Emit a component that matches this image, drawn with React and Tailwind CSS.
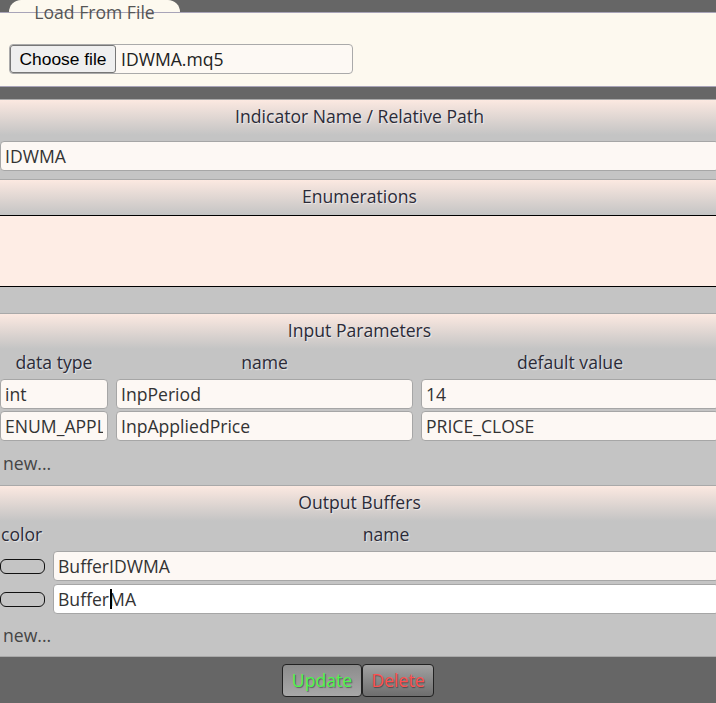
import React, { useState } from "react";

const font = "font-['Open_Sans',sans-serif]";
const headerCls =
  "h-[36px] border-t border-[#a9a9a9] bg-gradient-to-b from-[#fce9e1] to-[#c4c4c4] pt-[4px] text-center text-[17.6px] leading-[24px] text-[#2b2b38] [text-shadow:1px_1px_1px_rgba(255,255,255,0.6)]";
const inputCls =
  "block h-[30px] w-full rounded-[4px] border border-[#a6a6a6] bg-[#fdf8f4] px-[4px] text-[17.6px] text-[#333] outline-none";
const labelCls =
  "h-[26px] text-center text-[17.6px] leading-[26px] text-[#2b2b38] [text-shadow:1px_1px_1px_rgba(255,255,255,0.6)]";
const newCls = "pl-[3px] text-[17.6px] leading-[24px] text-[#444]";

const Section = ({ title, children }) => (
  <div className="bg-[#c4c4c4]">
    <div className={headerCls}>{title}</div>
    {children}
  </div>
);

export default function App() {
  const [params] = useState([
    { type: "int", name: "InpPeriod", value: "14" },
    { type: "ENUM_APPLIED_PRICE", name: "InpAppliedPrice", value: "PRICE_CLOSE" },
  ]);
  const [buffers] = useState(["BufferIDWMA", "BufferMA"]);

  return (
    <div className={`${font} h-[703px] w-[716px] overflow-hidden bg-[#666]`}>
      {/* load panel with its tab */}
      <div className="h-[12px] pl-[9px]">
        <div className="h-[13px] w-[171px] rounded-t-[12px] bg-[#fdf9ef]" />
      </div>
      <div className="h-[75px] border-y border-[#a8a4b8] bg-[#fdf9ef] pl-[9px]">
        <div className="relative -mt-[13px] h-[24px] w-[171px] text-center text-[17.6px] leading-[24px] text-[#555]">
          Load From File
        </div>
        <div className="mt-[20px] flex h-[30px] w-[344px] items-center rounded-[4px] border border-[#aaa] bg-[#fdf9f4]">
          <button className="h-[28px] w-[106px] rounded-[3px] border border-[#777] bg-[#efefef] font-['Liberation_Sans',sans-serif] text-[17.4px] text-black">
            Choose file
          </button>
          <span className="pl-[5px] text-[17.6px] text-[#222]">IDWMA.mq5</span>
        </div>
      </div>
      <div className="h-[12px]" />

      <div className="w-[719px]">
        <Section title="Indicator Name / Relative Path">
          <div className="pt-[6px] pb-[8px]">
            <input className={inputCls} defaultValue="IDWMA" />
          </div>
        </Section>

        <Section title="Enumerations">
          <div className="h-[72px] border-y-[1.5px] border-black bg-[#feede5]" />
          <div className="h-[26px]" />
        </Section>

        <Section title="Input Parameters">
          <div className="grid grid-cols-[108px_297px_1fr] gap-x-[8px] gap-y-[2px] pb-[10px]">
            <div className={`${labelCls} mb-[2px]`}>data type</div>
            <div className={`${labelCls} mb-[2px]`}>name</div>
            <div className={`${labelCls} mb-[2px]`}>default value</div>
            {params.map((p) => (
              <React.Fragment key={p.name}>
                <input className={inputCls} defaultValue={p.type} />
                <input className={inputCls} defaultValue={p.name} />
                <input className={inputCls} defaultValue={p.value} />
              </React.Fragment>
            ))}
          </div>
          <div className={`${newCls} pb-[10px]`}>new...</div>
        </Section>

        <Section title="Output Buffers">
          <div className="grid grid-cols-[45px_1fr] items-center gap-x-[8px] gap-y-[3px] pb-[9px]">
            <div className={`${labelCls} mb-[1px] pl-[1px] text-left`}>color</div>
            <div className={`${labelCls} mb-[1px]`}>name</div>
            {buffers.map((b, i) => (
              <React.Fragment key={b}>
                <div className="h-[15px] w-[45px] rounded-[6px] border-[1.5px] border-[#111]" />
                <div className="relative">
                  <input
                    className={
                      i === 1
                        ? `${inputCls} border-[#138a13] bg-white`
                        : inputCls
                    }
                    defaultValue={b}
                  />
                  {i === 1 && (
                    <span className="absolute left-[57px] top-[5px] h-[20px] w-[1.5px] bg-black" />
                  )}
                </div>
              </React.Fragment>
            ))}
          </div>
          <div className={`${newCls} pb-[9px]`}>new...</div>
        </Section>
      </div>

      {/* action buttons */}
      <div className="flex justify-center border-t border-[#a9a9a9] pt-[7px]">
        <button className="h-[33px] w-[80px] rounded-[4px] border border-[#222] bg-gradient-to-b from-[#8c8c8c] to-[#a8a8a8] text-[17.6px] text-[#4cf54c] [text-shadow:1px_1px_1px_rgba(0,0,0,0.4)]">
          Update
        </button>
        <button className="h-[33px] w-[72px] rounded-[4px] border border-[#222] bg-gradient-to-b from-[#a2a2a2] to-[#6e6e6e] text-[17.6px] text-[#ff4f4f] [text-shadow:1px_1px_1px_rgba(0,0,0,0.4)]">
          Delete
        </button>
      </div>
    </div>
  );
}
